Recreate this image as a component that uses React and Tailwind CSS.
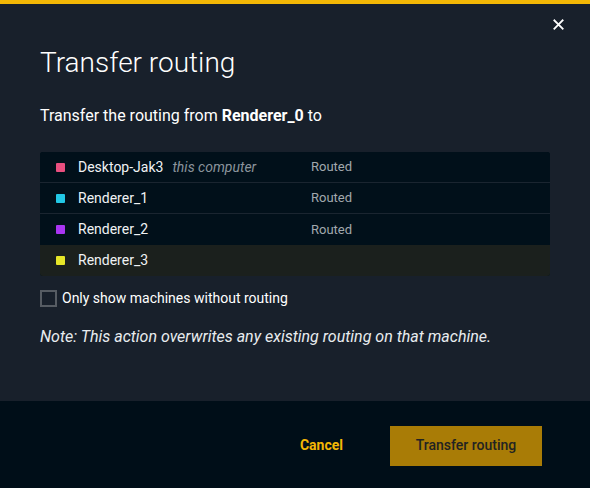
import React, { useState } from "react";

const machines = [
  { name: "Desktop-Jak3", note: "this computer", color: "bg-[#e94f7f]", status: "Routed" },
  { name: "Renderer_1", color: "bg-[#22c8e6]", status: "Routed" },
  { name: "Renderer_2", color: "bg-[#a935f2]", status: "Routed" },
  { name: "Renderer_3", color: "bg-[#e6e628]", status: "", active: true },
];

const App = () => {
  const [onlyFree, setOnlyFree] = useState(false);

  return (
    <div
      className="w-[590px] h-[488px] flex flex-col bg-[#18202b] text-[#e8ecef] overflow-hidden"
      style={{ fontFamily: "Roboto, 'Noto Sans', sans-serif" }}
    >
      <div className="h-[4px] bg-[#f3b705] shrink-0"></div>

      <div className="relative flex-1 flex flex-col px-[40px]">
        <button className="absolute right-[26px] top-[15px] bg-transparent">
          <svg width="11" height="11" viewBox="0 0 12 12">
            <path d="M1.5 1.5 L10.5 10.5 M10.5 1.5 L1.5 10.5" stroke="#fff" strokeWidth="2" strokeLinecap="square" />
          </svg>
        </button>

        <h1 className="mt-[40px] text-[28px] font-light leading-[38px] text-white">
          Transfer routing
        </h1>

        <p className="mt-[24px] text-[16px] leading-[20px] text-white">
          Transfer the routing from <span className="font-bold">Renderer_0</span> to
        </p>

        <div className="mt-[26px] rounded-[3px] overflow-hidden bg-[#01101a]">
          {machines.map((m, i) => (
            <div
              key={m.name}
              className={
                "h-[31px] flex items-center text-[14px] " +
                (m.active ? "bg-[#1b201d]" : "bg-[#01101a]") +
                (i < machines.length - 1 && !machines[i + 1].active ? " border-b border-[#1a2530]" : "")
              }
            >
              <div className={"w-[9px] h-[9px] ml-[16px] rounded-[1px] " + m.color}></div>
              <div className="w-[233px] ml-[13px] flex items-center gap-[9px]">
                <span className="text-[#f0f2f4]">{m.name}</span>
                {m.note && <span className="italic text-[#8b949c]">{m.note}</span>}
              </div>
              <span className="text-[13px] text-[#a2a8ad]">{m.status}</span>
            </div>
          ))}
        </div>

        <label className="mt-[12px] flex items-center gap-[5px] text-[14px] leading-[20px] text-white cursor-pointer">
          <input
            type="checkbox"
            checked={onlyFree}
            onChange={() => setOnlyFree(!onlyFree)}
            className="appearance-none w-[17px] h-[17px] border-2 border-[#565c63] bg-transparent"
          />
          Only show machines without routing
        </label>

        <p className="mt-[17px] text-[16px] leading-[24px] italic text-[#e8ecef]">
          Note: This action overwrites any existing routing on that machine.
        </p>
      </div>

      <div className="h-[87px] shrink-0 bg-[#000e18] flex items-center justify-end pr-[48px] pt-[2px]">
        <button className="text-[14px] font-bold text-[#f3b705] mr-[47px]">Cancel</button>
        <button className="w-[152px] h-[40px] bg-[#a97c06] text-[14px] font-medium text-[#222322]">
          Transfer routing
        </button>
      </div>
    </div>
  );
};

export default App;
